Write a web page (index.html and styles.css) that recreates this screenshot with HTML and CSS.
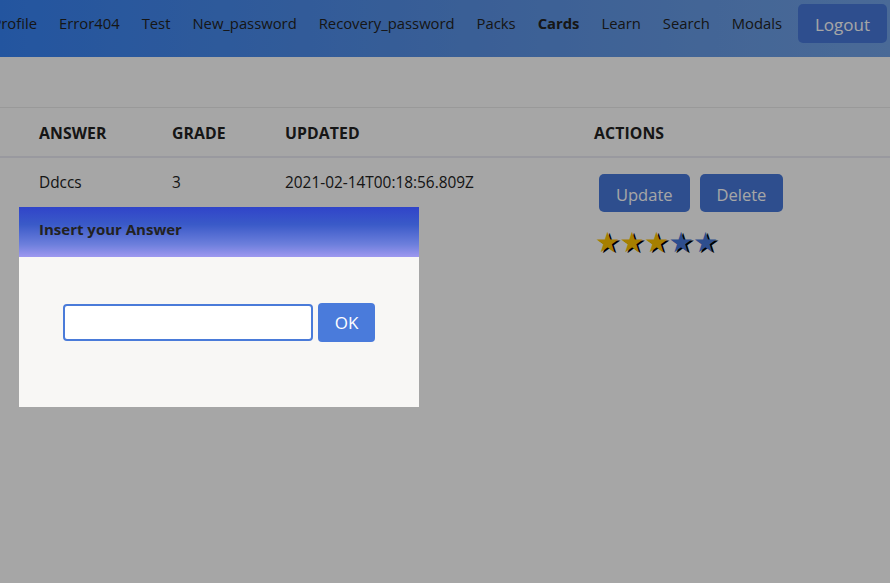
FILE: index.html
```html
<!DOCTYPE html>
<html lang="en">
<head>
<meta charset="utf-8">
<title>Cards</title>
<link rel="stylesheet" href="styles.css">
</head>
<body>
<header class="header">
  <nav class="nav">
    <a class="nav-link">Profile</a>
    <a class="nav-link">Error404</a>
    <a class="nav-link">Test</a>
    <a class="nav-link">New_password</a>
    <a class="nav-link">Recovery_password</a>
    <a class="nav-link">Packs</a>
    <a class="nav-link active">Cards</a>
    <a class="nav-link">Learn</a>
    <a class="nav-link">Search</a>
    <a class="nav-link">Modals</a>
  </nav>
  <button class="btn logout">Logout</button>
</header>
<main class="content">
  <div class="table">
    <div class="thead">
      <div class="cell">ANSWER</div>
      <div class="cell">GRADE</div>
      <div class="cell">UPDATED</div>
      <div class="cell">ACTIONS</div>
    </div>
    <div class="trow">
      <div class="cell">Ddccs</div>
      <div class="cell">3</div>
      <div class="cell">2021-02-14T00:18:56.809Z</div>
      <div class="cell actions">
        <div class="btns">
          <button class="btn action">Update</button>
          <button class="btn action">Delete</button>
        </div>
        <div class="stars"><span class="star on">★</span><span class="star on">★</span><span class="star on">★</span><span class="star">★</span><span class="star">★</span></div>
      </div>
    </div>
  </div>
</main>
<div class="overlay"></div>
<div class="modal">
  <div class="modal-head">Insert your Answer</div>
  <div class="modal-body">
    <input class="modal-input" type="text">
    <button class="btn ok">OK</button>
  </div>
</div>
</body>
</html>
```
FILE: styles.css
```css
* { box-sizing: border-box; }
html, body { margin: 0; padding: 0; }
body {
  width: 890px;
  height: 583px;
  overflow: hidden;
  background: #ffffff;
  font-family: "Open Sans", "Noto Sans", sans-serif;
  color: #222;
  position: relative;
}
.header {
  height: 57px;
  display: flex;
  align-items: flex-start;
  justify-content: flex-end;
  padding: 4px 3px 0 0;
  background: linear-gradient(90deg, #3783f5 0%, #5b93e6 55%, #72a3e8 100%);
  overflow: hidden;
}
.nav {
  display: flex;
  gap: 22px;
  flex-shrink: 0;
  padding-top: 9px;
}
.nav-link {
  font-size: 14.8px;
  color: #222;
  white-space: nowrap;
}
.nav-link.active { font-weight: 700; }
.btn {
  border: none;
  border-radius: 5px;
  background: #4779db;
  color: #ffffff;
  font-family: inherit;
  cursor: pointer;
}
.logout {
  flex-shrink: 0;
  margin-left: 16px;
  width: 89px;
  height: 39px;
  font-size: 17px;
  padding-top: 2px;
}
.content { padding-top: 50px; }
.table { width: 890px; }
.thead, .trow {
  display: grid;
  grid-template-columns: 172px 113px 309px 1fr;
}
.thead {
  border-top: 1px solid #ebebeb;
  border-bottom: 2px solid #ececf4;
  height: 51px;
  align-items: center;
}
.thead .cell {
  font-weight: 700;
  font-size: 15.8px;
  letter-spacing: 0.1px;
  padding-top: 1px;
}
.cell:first-child { padding-left: 39px; }
.trow { padding-top: 14px; }
.trow .cell { font-size: 15.4px; }
.actions {
  display: flex;
  flex-direction: column;
  gap: 20px;
  padding-top: 2px;
}
.btns { display: flex; gap: 10px; padding-left: 5px; }
.action {
  height: 38px;
  font-size: 16.5px;
  padding: 2px 17px 0;
}
.stars {
  display: flex;
  padding-left: 1px;
  line-height: 22px;
}
.star {
  font-size: 28px;
  color: #4779db;
  width: 24.5px;
  text-shadow: 2px 1px 0 #000;
  font-family: "DejaVu Sans", sans-serif;
}
.star.on { color: #ffc400; }
.overlay {
  position: absolute;
  inset: 0;
  background: rgba(0, 0, 0, 0.35);
}
.modal {
  position: absolute;
  left: 19px;
  top: 207px;
  width: 400px;
  height: 200px;
  background: #f8f7f5;
}
.modal-head {
  height: 50px;
  padding: 12px 20px 0;
  font-weight: 700;
  font-size: 15px;
  color: #222;
  background: linear-gradient(180deg, #3044c9 0%, #3a5ac8 35%, #6d7fdc 75%, #9e98ef 100%);
}
.modal-body {
  display: flex;
  align-items: center;
  padding: 46px 0 0 44px;
  gap: 5px;
}
.modal-input {
  width: 250px;
  height: 37px;
  border: 2px solid #4a7bd9;
  border-radius: 4px;
  background: #fff;
  outline: none;
}
.ok {
  width: 57px;
  height: 39px;
  border-radius: 4px;
  background: #4a7bdb;
  font-size: 17px;
}
```
